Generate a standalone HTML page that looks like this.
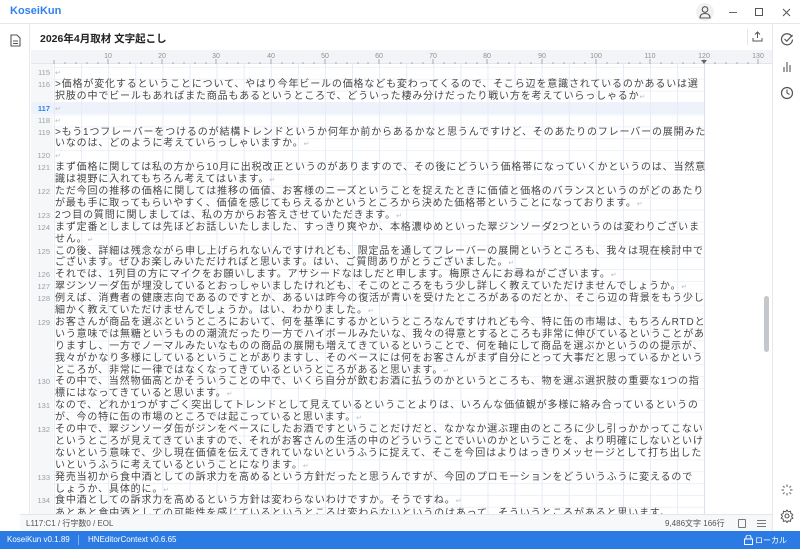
<!DOCTYPE html>
<html><head><meta charset="utf-8">
<style>
*{margin:0;padding:0;box-sizing:border-box}
body{width:800px;height:549px;overflow:hidden;background:#fff;font-family:"Liberation Sans","Noto Sans CJK JP",sans-serif;position:relative;color:#333}
.abs{position:absolute}
#titlebar{left:0;top:0;width:800px;height:24px;border-bottom:1px solid #e6e8ec;background:#fff}
#logo{left:10px;top:5px;font-size:11px;font-weight:bold;color:#2f7ff0}
#leftbar{left:0;top:24px;width:30px;height:507px;border-right:1px solid #e6e8ec;background:#fff}
#rightbar{left:772px;top:24px;width:28px;height:507px;border-left:1px solid #e6e8ec;background:#fff}
#dochead{left:31px;top:24px;width:741px;height:26px;background:#fff}
#doctitle{left:9px;top:7px;font-size:10.5px;font-weight:bold;color:#222}
#ruler{left:31px;top:50px;width:741px;height:14px;background:#f2f4f7;border-bottom:1px solid #e3e6eb}
#gutter{left:31px;top:64px;width:22px;height:452px;background:#f6f7f9}
#editor{left:53px;top:64px;width:652px;height:452px;overflow:hidden;
 background-image:linear-gradient(to right,#e6ecf7 1px,transparent 1px),linear-gradient(to bottom,#eef2f8 1px,transparent 1px);
 background-size:27.1px 100%,100% 11.9px;background-position:1px 0,0 2.9px;border-right:1px solid #d8e0ee}
#clip{left:0;top:0;width:772px;height:514px;overflow:hidden}
.ln{position:absolute;left:31px;width:19px;text-align:right;font-size:7.5px;color:#9aa0a8;font-family:"Liberation Sans",sans-serif;margin-top:-2px}
.tl{position:absolute;left:55px;font-size:10px;letter-spacing:0.84px;line-height:11.9px;height:11.9px;color:#444;white-space:nowrap}
.rt{color:#b9c0ca;font-size:7px}
#status{left:20px;top:514px;width:752px;height:17px;background:#f7f8fa;border-top:1px solid #e3e6eb;font-size:8px;color:#555;font-family:"Liberation Sans Narrow","Liberation Sans","Noto Sans CJK JP",sans-serif}
#footer{left:0;top:531px;width:800px;height:18px;background:#2c7be5;color:#fff;font-size:8px}
</style></head><body>
<div id="titlebar" class="abs">
 <div id="logo" class="abs">KoseiKun</div>
 <div class="abs" style="left:696px;top:3px;width:18px;height:18px;border-radius:9px;background:#f0f1f3"></div>
 <svg class="abs" style="left:699px;top:5px" width="12" height="14" viewBox="0 0 12 14"><circle cx="6" cy="4.5" r="2.8" fill="none" stroke="#555" stroke-width="1.1"/><path d="M1 13 Q1 8.5 6 8.5 Q11 8.5 11 13 Z" fill="none" stroke="#555" stroke-width="1.1"/></svg>
 <div class="abs" style="left:729px;top:12px;width:8px;height:1px;background:#666"></div>
 <div class="abs" style="left:755px;top:8px;width:8px;height:8px;border:1px solid #555"></div>
 <svg class="abs" style="left:782px;top:8px" width="9" height="9" viewBox="0 0 9 9"><path d="M1 1L8 8M8 1L1 8" stroke="#555" stroke-width="1"/></svg>
</div>
<div id="leftbar" class="abs">
 <svg class="abs" style="left:10px;top:10px" width="11" height="13" viewBox="0 0 11 13"><path d="M1 1H7L10 4V12H1Z" fill="none" stroke="#555" stroke-width="1.1"/><path d="M3 7H8M3 9.5H8" stroke="#555" stroke-width="1"/></svg>
</div>
<div id="rightbar" class="abs">
 <svg class="abs" style="left:7px;top:8px" width="14" height="14" viewBox="0 0 14 14"><path d="M12 5A5.5 5.5 0 1 0 12.5 7.5" fill="none" stroke="#555" stroke-width="1.2"/><path d="M4.5 7L6.8 9.2L12.5 3" fill="none" stroke="#555" stroke-width="1.2"/></svg>
 <svg class="abs" style="left:9px;top:36px" width="10" height="12" viewBox="0 0 10 12"><path d="M2 12V7M5 12V2M8 12V5" stroke="#555" stroke-width="1.1"/></svg>
 <svg class="abs" style="left:7px;top:62px" width="14" height="14" viewBox="0 0 14 14"><circle cx="7" cy="7" r="5.5" fill="none" stroke="#555" stroke-width="1.2"/><path d="M7 3.5V7L9.5 8.5" fill="none" stroke="#555" stroke-width="1.1"/></svg>
 <svg class="abs" style="left:8px;top:460px" width="12" height="12" viewBox="0 0 12 12"><g stroke="#777" stroke-width="1.2"><path d="M6 0.5V3M6 9V11.5M0.5 6H3M9 6H11.5M2 2L3.6 3.6M8.4 8.4L10 10M10 2L8.4 3.6M3.6 8.4L2 10"/></g></svg>
 <svg class="abs" style="left:7px;top:485px" width="14" height="14" viewBox="0 0 14 14"><circle cx="7" cy="7" r="2" fill="none" stroke="#555" stroke-width="1.1"/><path d="M7 1L8.3 2.8L10.5 2.2L10.8 4.4L12.8 5.5L11.6 7.4L12.8 9.3L10.8 10.2L10.5 12.4L8.3 11.8L7 13.5L5.7 11.8L3.5 12.4L3.2 10.2L1.2 9.3L2.4 7.4L1.2 5.5L3.2 4.4L3.5 2.2L5.7 2.8Z" fill="none" stroke="#555" stroke-width="1"/></svg>
</div>
<div id="dochead" class="abs">
 <div id="doctitle" class="abs">2026年4月取材 文字起こし</div>
 <div class="abs" style="left:716px;top:5px;width:1px;height:16px;background:#e3e6eb"></div>
 <svg class="abs" style="left:721px;top:7px" width="11" height="11" viewBox="0 0 11 11"><path d="M5.5 7V1M3 3.5L5.5 1L8 3.5M1 7V10H10V7" fill="none" stroke="#555" stroke-width="1"/></svg>
</div>
<div id="ruler" class="abs">
<svg width="741" height="14" style="position:absolute;left:0;top:0">
<g fill="#8a9099" font-size="7" font-family="Liberation Sans,sans-serif" text-anchor="middle">
<text x="77" y="8">10</text><text x="131" y="8">20</text><text x="185" y="8">30</text><text x="240" y="8">40</text><text x="294" y="8">50</text><text x="348" y="8">60</text><text x="402" y="8">70</text><text x="456" y="8">80</text><text x="511" y="8">90</text><text x="565" y="8">100</text><text x="619" y="8">110</text><text x="673" y="8">120</text><text x="727" y="8">130</text>
</g>
<g stroke="#a6acb4" stroke-width="1">
<path d="M23 10V14M34 12V14M45 12V14M56 12V14M67 12V14M77 9V14M88 12V14M99 12V14M110 12V14M121 12V14M131 9V14M142 12V14M153 12V14M164 12V14M175 12V14M185 9V14M196 12V14M207 12V14M218 12V14M229 12V14M240 9V14M251 12V14M262 12V14M272 12V14M283 12V14M294 9V14M305 12V14M316 12V14M327 12V14M337 12V14M348 9V14M359 12V14M370 12V14M381 12V14M392 12V14M402 9V14M413 12V14M424 12V14M435 12V14M446 12V14M456 9V14M467 12V14M478 12V14M489 12V14M500 12V14M511 9V14M522 12V14M533 12V14M543 12V14M554 12V14M565 9V14M576 12V14M587 12V14M598 12V14M609 12V14M619 9V14M630 12V14M641 12V14M652 12V14M663 12V14M673 9V14M684 12V14M695 12V14M706 12V14M717 12V14M727 9V14"/>
</g>
<path d="M670 10H676L673 14Z" fill="#666"/>
</svg>
</div>
<div id="gutter" class="abs"></div>
<div class="abs" style="left:31px;top:102px;width:674px;height:12px;background:#eef2fa"></div>
<div id="editor" class="abs" style="background-color:transparent"></div>
<div class="abs" style="left:764px;top:296px;width:5px;height:56px;border-radius:3px;background:#c4c7cc"></div>

<div id="clip" class="abs">
<div class="ln" style="top:70px">115</div>
<div class="ln" style="top:82px">116</div>
<div class="ln" style="top:105.7px;color:#2f7ff0;font-weight:bold">117</div>
<div class="ln" style="top:117.6px">118</div>
<div class="ln" style="top:129.5px">119</div>
<div class="ln" style="top:153.3px">120</div>
<div class="ln" style="top:165.2px">121</div>
<div class="ln" style="top:189px">122</div>
<div class="ln" style="top:212.8px">123</div>
<div class="ln" style="top:224.7px">124</div>
<div class="ln" style="top:248.5px">125</div>
<div class="ln" style="top:272.3px">126</div>
<div class="ln" style="top:284.2px">127</div>
<div class="ln" style="top:296.1px">128</div>
<div class="ln" style="top:319.9px">129</div>
<div class="ln" style="top:379.4px">130</div>
<div class="ln" style="top:403.2px">131</div>
<div class="ln" style="top:427px">132</div>
<div class="ln" style="top:474.6px">133</div>
<div class="ln" style="top:498.4px">134</div>

<div class="tl" style="top:67px"><span class="rt">↵</span></div>
<div class="tl" style="top:78.9px">&gt;価格が変化するということについて、やはり今年ビールの価格なども変わってくるので、そこら辺を意識されているのかあるいは選</div>
<div class="tl" style="top:90.8px">択肢の中でビールもあればまた商品もあるというところで、どういった棲み分けだったり戦い方を考えていらっしゃるか<span class="rt">↵</span></div>
<div class="tl" style="top:102.7px"><span class="rt">↵</span></div>
<div class="tl" style="top:114.6px"><span class="rt">↵</span></div>
<div class="tl" style="top:126.5px">&gt;もう1つフレーバーをつけるのが結構トレンドというか何年か前からあるかなと思うんですけど、そのあたりのフレーバーの展開みた</div>
<div class="tl" style="top:138.4px">いなのは、どのように考えていらっしゃいますか。<span class="rt">↵</span></div>
<div class="tl" style="top:150.3px"><span class="rt">↵</span></div>
<div class="tl" style="top:162.2px">まず価格に関しては私の方から10月に出税改正というのがありますので、その後にどういう価格帯になっていくかというのは、当然意</div>
<div class="tl" style="top:174.1px">識は視野に入れてもちろん考えてはいます。<span class="rt">↵</span></div>
<div class="tl" style="top:186px">ただ今回の推移の価格に関しては推移の価値、お客様のニーズということを捉えたときに価値と価格のバランスというのがどのあたり</div>
<div class="tl" style="top:197.9px">が最も手に取ってもらいやすく、価値を感じてもらえるかというところから決めた価格帯ということになっております。<span class="rt">↵</span></div>
<div class="tl" style="top:209.8px">2つ目の質問に関しましては、私の方からお答えさせていただきます。<span class="rt">↵</span></div>
<div class="tl" style="top:221.7px">まず定番としましては先ほどお話しいたしました、すっきり爽やか、本格濃ゆめといった翠ジンソーダ2つというのは変わりございま</div>
<div class="tl" style="top:233.6px">せん。<span class="rt">↵</span></div>
<div class="tl" style="top:245.5px">この後、詳細は残念ながら申し上げられないんですけれども、限定品を通してフレーバーの展開というところも、我々は現在検討中で</div>
<div class="tl" style="top:257.4px">ございます。ぜひお楽しみいただければと思います。はい、ご質問ありがとうございました。<span class="rt">↵</span></div>
<div class="tl" style="top:269.3px">それでは、1列目の方にマイクをお願いします。アサシードなはしだと申します。梅原さんにお尋ねがございます。<span class="rt">↵</span></div>
<div class="tl" style="top:281.2px">翠ジンソーダ缶が埋没しているとおっしゃいましたけれども、そこのところをもう少し詳しく教えていただけませんでしょうか。<span class="rt">↵</span></div>
<div class="tl" style="top:293.1px">例えば、消費者の健康志向であるのですとか、あるいは昨今の復活が青いを受けたところがあるのだとか、そこら辺の背景をもう少し</div>
<div class="tl" style="top:305px">細かく教えていただけませんでしょうか。はい、わかりました。<span class="rt">↵</span></div>
<div class="tl" style="top:316.9px">お客さんが商品を選ぶというところにおいて、何を基準にするかというところなんですけれども今、特に缶の市場は、もちろんRTDと</div>
<div class="tl" style="top:328.8px">いう意味では無糖というものの潮流だったり一方でハイボールみたいな、我々の得意とするところも非常に伸びているということがあ</div>
<div class="tl" style="top:340.7px">りますし、一方でノーマルみたいなものの商品の展開も増えてきているということで、何を軸にして商品を選ぶかというのの提示が、</div>
<div class="tl" style="top:352.6px">我々がかなり多様にしているということがありますし、そのベースには何をお客さんがまず自分にとって大事だと思っているかという</div>
<div class="tl" style="top:364.5px">ところが、非常に一律ではなくなってきているというところがあると思います。<span class="rt">↵</span></div>
<div class="tl" style="top:376.4px">その中で、当然物価高とかそういうことの中で、いくら自分が飲むお酒に払うのかというところも、物を選ぶ選択肢の重要な1つの指</div>
<div class="tl" style="top:388.3px">標にはなってきていると思います。<span class="rt">↵</span></div>
<div class="tl" style="top:400.2px">なので、どれか1つがすごく突出してトレンドとして見えているということよりは、いろんな価値観が多様に絡み合っているというの</div>
<div class="tl" style="top:412.1px">が、今の特に缶の市場のところでは起こっていると思います。<span class="rt">↵</span></div>
<div class="tl" style="top:424px">その中で、翠ジンソーダ缶がジンをベースにしたお酒ですということだけだと、なかなか選ぶ理由のところに少し引っかかってこない</div>
<div class="tl" style="top:435.9px">というところが見えてきていますので、それがお客さんの生活の中のどういうことでいいのかということを、より明確にしないといけ</div>
<div class="tl" style="top:447.8px">ないという意味で、少し現在価値を伝えてきれていないというふうに捉えて、そこを今回はよりはっきりメッセージとして打ち出した</div>
<div class="tl" style="top:459.7px">いというふうに考えているということになります。<span class="rt">↵</span></div>
<div class="tl" style="top:471.6px">発売当初から食中酒としての訴求力を高めるという方針だったと思うんですが、今回のプロモーションをどういうふうに変えるので</div>
<div class="tl" style="top:483.5px">しょうか、具体的に。<span class="rt">↵</span></div>
<div class="tl" style="top:495.4px">食中酒としての訴求力を高めるという方針は変わらないわけですか。そうですね。<span class="rt">↵</span></div>
<div class="tl" style="top:508.3px">あとあと食中酒としての可能性を感じているというところは変わらないというのはあって、そういうところがあると思います。</div>
</div>

<div id="status" class="abs">
 <div class="abs" style="left:6px;top:3px">L117:C1 / 行字数0 / EOL</div>
 <div class="abs" style="left:645px;top:3px">9,486文字 166行</div>
 <div class="abs" style="left:718px;top:4px;width:8px;height:9px;border:1px solid #777;border-radius:1px"></div>
 <svg class="abs" style="left:737px;top:4px" width="9" height="9" viewBox="0 0 9 9"><path d="M0 1.5H9M0 4.5H9M0 7.5H9" stroke="#777" stroke-width="1"/></svg>
</div>
<div id="footer" class="abs">
 <div class="abs" style="left:7px;top:4px">KoseiKun v0.1.89</div>
 <div class="abs" style="left:78px;top:4px;width:1px;height:10px;background:#7fb0f0"></div>
 <div class="abs" style="left:88px;top:4px">HNEditorContext v0.6.65</div>
 <svg class="abs" style="left:744px;top:4px" width="9" height="10" viewBox="0 0 9 10"><rect x="0.5" y="4" width="8" height="5.5" fill="none" stroke="#fff" stroke-width="1"/><path d="M2 4V2.5A2.5 2.5 0 0 1 7 2.5V4" fill="none" stroke="#fff" stroke-width="1"/></svg>
 <div class="abs" style="left:755px;top:4px">ローカル</div>
</div>
</body></html>
